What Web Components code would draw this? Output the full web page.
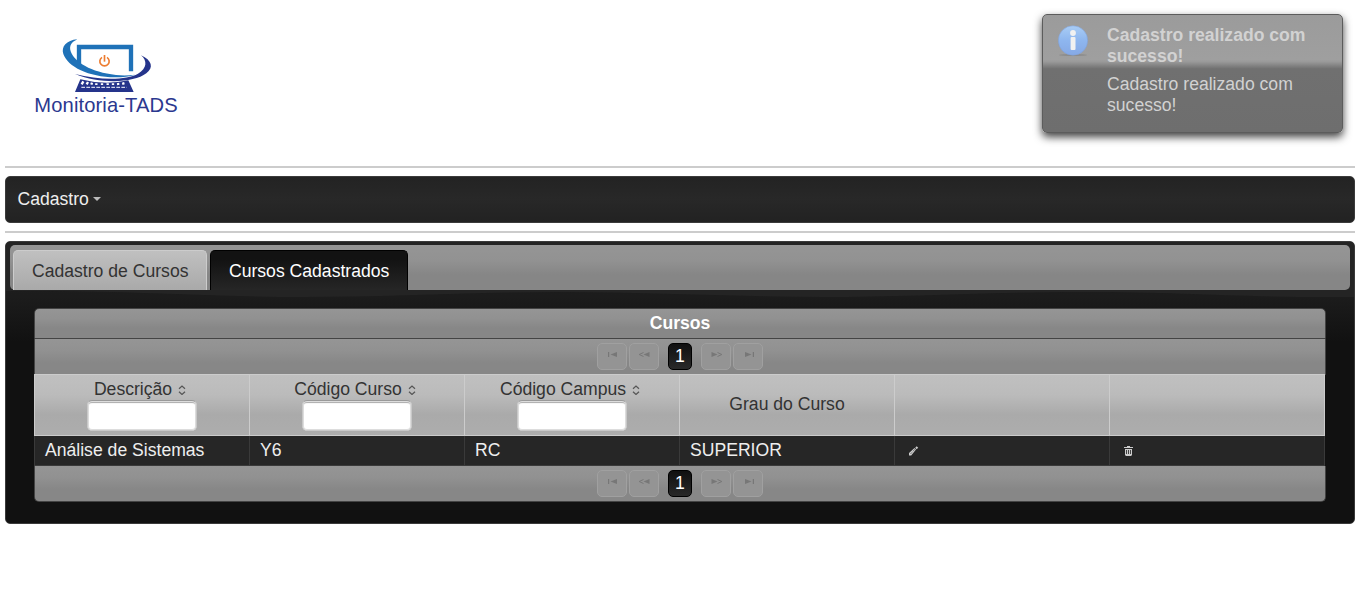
<!DOCTYPE html>
<html lang="pt-BR">
<head>
<meta charset="utf-8">
<title>Monitoria-TADS</title>
<style>
html,body{margin:0;background:#fff}
body{font:17.6px/21px "Liberation Sans",Arial,sans-serif}
</style>
</head>
<body>
<monitoria-app></monitoria-app>
<script>
const define = (name, html, setup) => customElements.define(name, class extends HTMLElement {
  constructor() {
    super();
    const t = document.createElement('template');
    t.innerHTML = html;
    this.attachShadow({mode: 'open'}).append(t.content.cloneNode(true));
  }
  connectedCallback() { if (setup) setup(this, this.shadowRoot); }
});

define('app-logo', `<style>:host{display:block;width:180px;height:100px}svg{display:block}</style>
<svg width="180" height="100" viewBox="0 0 540 300">
  <path d="M177 108V51H333V124" fill="none" stroke="#1f72b8" stroke-width="13"/>
  <path d="M172 28C139 31 123 50 130 72C143 110 205 141 286 142Q320 142 345 134Q318 138 288 135C213 127 163 96 152 64C147 47 154 37 172 28Z" fill="#1f72b8"/>
  <path d="M363 76C396 91 402 113 379 130C340 160 240 162 165 132C235 150 318 152 354 131C382 115 382 92 363 76Z" fill="#25348b"/>
  <path d="M181 148Q255 167 325 151L341 186H165Z" fill="#25348b"/>
  <path d="M190 154l-5 9M204 156l-4 7M216 158l-2 6M229 160v5M246 160v5M263 160v5M279 160v5M294 159l1 6M309 157l2 7" stroke="#fff" stroke-width="7"/>
  <path d="M184 172h136" stroke="#d0d4ea" stroke-width="4" stroke-dasharray="11 4"/>
  <path d="M246 82A14 14 0 1 0 261 82" fill="none" stroke="#ed7d31" stroke-width="5"/>
  <path d="M253.500 75V95" stroke="#ed7d31" stroke-width="5"/>
  <text x="43" y="246" font-family="Liberation Sans, Arial, sans-serif" font-size="60.500" textLength="430" fill="#2b388f">Monitoria-TADS</text>
</svg>`);

define('growl-message', `<style>
:host{position:absolute;top:14px;right:17px;width:301px;height:119px;box-sizing:border-box;border:1px solid #5c5c5c;border-radius:5px;background:linear-gradient(#9b9b9b 0,#9f9f9f 38%,#999 40%,#707070 46%,#6e6e6e 100%);box-shadow:0 4px 8px rgba(0,0,0,.75);color:#d2d2d2}
.in{display:flex;padding:10px 15px 0;gap:17px}
svg{display:block;flex:none;margin-top:-1px}
.txt{flex:1}
b{display:block;margin-bottom:7px}
p{margin:0}
</style><div class="in">
<svg width="32" height="33" viewBox="0 0 32 33"><defs><linearGradient id="g" x2="0" y2="1"><stop stop-color="#a9cdf5"/><stop offset=".5" stop-color="#8eb6ef"/><stop offset="1" stop-color="#86a9e5"/></linearGradient></defs>
<ellipse cx="15" cy="31" rx="14" ry="1" fill="#8c8c8c"/><circle cx="15" cy="16.500" r="14.700" fill="url(#g)" stroke="#7f9fd6" stroke-width=".5"/>
<circle cx="15" cy="9" r="2.900" fill="#f1f1f1"/><rect x="12.600" y="13" width="4.900" height="13" rx="1" fill="#f1f1f1"/></svg>
<div class="txt"><b><slot name="title"></slot></b><p><slot></slot></p></div></div>`);

define('menu-bar', `<style>
:host{display:flex;align-items:center;box-sizing:border-box;height:47px;padding:0 11.500px 1px;border:1px solid #3b3b3b;border-radius:5px;background:linear-gradient(#232323,#282828 50%,#222);color:#eee}
i{width:0;border:4px solid transparent;border-top:4px solid #bbb;border-bottom:0;margin:0 0 0 4px}
</style><slot></slot><i></i>`);

define('tab-item', `<style>
:host{display:block;box-sizing:border-box;height:40px;padding:10px 18px 0;border:1px solid #ccc;border-bottom:0;border-radius:5px 5px 0 0;background:linear-gradient(#c0c0c0,#a9a9a9);color:#333}
:host([active]){padding:10px 17.500px 0;border-color:#000;background:linear-gradient(#121212 20%,#262626);color:#fff}
</style><slot></slot>`);

define('tab-panel', `<style>
:host{display:block;position:relative;box-sizing:border-box;height:283px;border:1px solid #3a3a3a;border-radius:5px;padding:3px 4px;background:linear-gradient(#1f1f1f 0,#1c1c1c 55px,#111 100px,#111);overflow:hidden}
.wave{position:absolute;left:0;top:0}
.tabs{position:relative;display:flex;align-items:flex-end;gap:3px;height:45px;box-sizing:border-box;padding-left:3px;border-radius:5px;background:linear-gradient(#959595,#929292 33%,#868686 66%,#868686)}
.body{position:relative;padding:18px 24px 0}
</style>
<svg class="wave" width="1350" height="60" viewBox="6 242 1350 60"><path d="M6 242H1356V297Q1342 297 1330 297C1230 297 1180 292 1083 292S910 297 823 297S650 292 563 292S390 297 304 297S130 291 45 291H6Z" fill="#242424"/></svg>
<div class="tabs"><slot name="tab"></slot></div><div class="body"><slot></slot></div>`);

define('pager-button', `<style>
:host{display:block;box-sizing:border-box;width:30px;height:27px;border:1px solid #a0a0a0;border-radius:5px;background:#949494}
svg{display:block;margin:6px 0 0 8px}
:host([type=first]) svg{margin-left:9px}
:host([type=next]) svg,:host([type=last]) svg{transform:scaleX(-1);margin-left:9px}
</style><svg width="12" height="10"></svg>`, (el, r) => {
  const edge = el.getAttribute('type') === 'first' || el.getAttribute('type') === 'last';
  r.querySelector('svg').innerHTML = edge
    ? '<path d="M1 2h1.200v5H1ZM10 2v5L3.500 4.500Z" fill="#777"/>'
    : '<path d="M11.500 2v5L5.500 4.500Z" fill="#777"/><path d="M5.500 2.500L1.200 4.500L5.500 6.500" stroke="#777" fill="none"/>';
});

define('data-pager', `<style>
:host{display:flex;justify-content:center;align-items:flex-start;padding-top:4px;box-sizing:border-box;height:36px;border:1px solid #444;border-width:0 1px;gap:2px;background:linear-gradient(#959595,#919191 33%,#878787 66%,#878787)}
:host([bottom]){border-bottom-width:1px;border-radius:0 0 5px 5px}
b{box-sizing:border-box;width:24px;height:27px;border:1px solid #000;border-radius:5px;margin:0 7px;background:linear-gradient(#101010,#292929);color:#fff;text-align:center;font-weight:400;line-height:25px}
</style><pager-button type="first"></pager-button><pager-button type="prev"></pager-button><b>1</b><pager-button type="next"></pager-button><pager-button type="last"></pager-button>`);

define('head-cell', `<style>
:host{display:flex;flex-direction:column;align-items:center;justify-content:center;box-sizing:border-box;border-left:1px solid #ccc;padding-bottom:2px;color:#333}
.t{display:flex;align-items:center}
svg{display:none;margin:1px 0 0 5px}
input{display:none;box-sizing:border-box;width:110px;height:31px;margin:0;border:1px solid #c8c8c8;border-top-color:#999;border-radius:5px;background:#fff;box-shadow:inset 0 0 0 1px #ddd,inset 0 2px 1px #aaa}
:host([filter]){justify-content:flex-start;padding:4px 0 0}
:host([filter]) svg,:host([filter]) input{display:block}
:host([filter]) .t{padding-right:3px}
</style><div class="t"><slot></slot><svg width="10" height="10" fill="none" stroke="#555" stroke-width="1.200"><path d="M2 3.800L5 1L8 3.800M2 6.700L5 9.500L8 6.700"/></svg></div><input aria-label="Filtro">`);

define('body-cell', `<style>:host{display:block;box-sizing:border-box;padding:4px 10px;border-left:1px solid #3a3a3a;color:#eee}</style><slot></slot>`);

define('action-icon', `<style>:host{display:block;padding:5px 0 0 3px}svg{display:block}</style><svg width="12" height="12" fill="#ccc"></svg>`, (el, r) => {
  r.querySelector('svg').innerHTML = el.getAttribute('type') === 'edit'
    ? '<path d="M1 10.500V8L6.500 3L8 4.500L3.200 10.500ZM7.200 2.800L8.700 1.200L10.200 2.700L8.700 4.200Z"/><path d="M2.500 9L7 4" stroke="#444" stroke-width=".9" stroke-dasharray="1 1"/>'
    : '<path d="M1 2h3V1h3v1h3v1H1ZM2 4h7v6L8 11H3L2 10Z"/><path d="M3.500 5v4M5.500 5v4M7.500 5v4" stroke="#444"/>';
});

define('course-table', `<style>
:host{display:block;width:1292px}
.cap{box-sizing:border-box;height:31px;padding-top:4px;border:1px solid #444;border-radius:5px 5px 0 0;background:linear-gradient(#959595,#919191 33%,#878787 66%,#878787);color:#fff;text-align:center;font-weight:700}
.row{display:grid;grid-template-columns:repeat(6,215px);width:1291px;box-sizing:border-box}
.head{height:62px;margin-top:-1px;border:solid #ccc;border-width:1px 1px 1px 0;background:linear-gradient(#c0c0c0,#bbb 33%,#aaa 66%,#adadad);position:relative}
.data{height:30px;border:solid #3a3a3a;border-width:0 1px 1px 0;background:#262626}
</style>
<div class="cap">Cursos</div><data-pager></data-pager>
<div class="row head"><head-cell filter>Descrição</head-cell><head-cell filter>Código Curso</head-cell><head-cell filter>Código Campus</head-cell><head-cell>Grau do Curso</head-cell><head-cell></head-cell><head-cell></head-cell></div>
<div class="row data"><body-cell>Análise de Sistemas</body-cell><body-cell>Y6</body-cell><body-cell>RC</body-cell><body-cell>SUPERIOR</body-cell><body-cell><action-icon type="edit"></action-icon></body-cell><body-cell><action-icon type="delete"></action-icon></body-cell></div>
<data-pager bottom></data-pager>`);

define('monitoria-app', `<style>
:host{display:block;position:relative;padding:0 5px}
header{height:136px;padding:30px 0 0 15px}
hr{height:2px;margin:0 0 8px;border:0;background:#ccc}
menu-bar{margin-bottom:8px}
</style>
<header><app-logo></app-logo></header><hr>
<menu-bar>Cadastro</menu-bar><hr>
<tab-panel><tab-item slot="tab">Cadastro de Cursos</tab-item><tab-item slot="tab" active>Cursos Cadastrados</tab-item><course-table></course-table></tab-panel>
<growl-message><span slot="title">Cadastro realizado com sucesso!</span>Cadastro realizado com sucesso!</growl-message>`);
</script>
</body>
</html>
